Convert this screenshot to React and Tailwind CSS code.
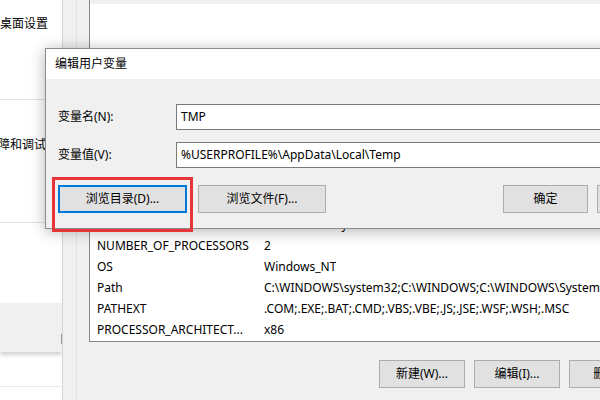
const font = { fontFamily: '"Noto Sans", "Noto Sans CJK SC", sans-serif' };

const rows = [
  ['DriverData', 'C:\\Windows\\System32\\Drivers\\DriverData'],
  ['NUMBER_OF_PROCESSORS', '2'],
  ['OS', 'Windows_NT'],
  ['Path', 'C:\\WINDOWS\\system32;C:\\WINDOWS;C:\\WINDOWS\\System32\\Wbem;C:\\WINDOWS\\System32\\WindowsPowerShell\\v1.0\\'],
  ['PATHEXT', '.COM;.EXE;.BAT;.CMD;.VBS;.VBE;.JS;.JSE;.WSF;.WSH;.MSC'],
  ['PROCESSOR_ARCHITECT...', 'x86'],
];

function WinButton({ children, className = '' }) {
  return (
    <div
      className={`h-[28px] shrink-0 flex items-center justify-center bg-[#e1e1e1] border border-[#adadad] text-[12px] text-black ${className}`}
    >
      {children}
    </div>
  );
}

export default function App() {
  return (
    <div className="w-[600px] h-[400px] relative overflow-hidden bg-white flex" style={font}>
      {/* settings pane behind */}
      <div className="w-[63px] shrink-0 flex flex-col bg-white border-r border-[#d4d4d4] overflow-hidden text-[12px] text-black">
        <div className="h-[100px] shrink-0 border-b border-[#e3e3e3] pt-[16px] leading-[16px] whitespace-nowrap">
          <span className="-ml-[24px] inline-block">远程桌面设置</span>
        </div>
        <div className="h-[123px] shrink-0 border-b border-[#e3e3e3] pt-[37px] leading-[16px] whitespace-nowrap">
          <span className="-ml-[14px] inline-block">故障和调试</span>
        </div>
        <div className="h-[80px] shrink-0" />
        <div className="h-[49px] shrink-0 bg-[#f0f0f0] shadow-[0_3px_4px_rgba(0,0,0,0.18)] flex justify-end items-end pb-[8px]">
          <div className="w-[1px] h-[10px] bg-[#9a9a9a]" />
        </div>
        <div className="h-[35px] shrink-0 border-b border-[#e8e8e8]" />
      </div>

      {/* environment variables window behind */}
      <div className="w-[14px] shrink-0 bg-[#f0f0f0] border-r border-[#e2e2e2]" />
      <div className="flex-1 min-w-0 flex flex-col bg-[#f0f0f0] pl-[12px]">
        <div className="h-[342px] shrink-0 bg-white border-l border-b border-[#828790] flex flex-col pb-[1px]">
          <div className="h-[4px] shrink-0 bg-[#f0f0f0]" />
          <div className="flex-1 flex flex-col justify-end">
            {rows.map(([name, value]) => (
              <div key={name} className="h-[21px] leading-[21px] flex text-[12px] text-black whitespace-nowrap pl-[7px]">
                <div className="w-[167px] shrink-0">{name}</div>
                <div className="overflow-hidden">{value}</div>
              </div>
            ))}
          </div>
        </div>
        <div className="flex pt-[18px] pl-[290px] gap-[9px]">
          <WinButton className="w-[86px]">新建(W)...</WinButton>
          <WinButton className="w-[86px]">编辑(I)...</WinButton>
          <WinButton className="w-[86px]">删除(L)</WinButton>
        </div>
      </div>

      {/* edit user variable dialog */}
      <div className="absolute left-[45px] top-[48px] w-[575px] h-[181px] border border-[#8c8c8c] bg-[#f0f0f0] shadow-[0_2px_14px_rgba(0,0,0,0.3)] flex flex-col">
        <div className="h-[30px] shrink-0 bg-white pl-[9px] leading-[30px] text-[12px] text-black">编辑用户变量</div>
        <div className="flex-1 flex flex-col pl-[12px] pt-[25px] text-[12px] text-black">
          <div className="flex items-center h-[26px]">
            <div className="w-[118px] shrink-0">变量名(N):</div>
            <div className="flex-1 h-[26px] bg-white border border-[#7a7a7a] pl-[4px] leading-[24px] text-[12px]">TMP</div>
          </div>
          <div className="flex items-center h-[26px] mt-[12px]">
            <div className="w-[118px] shrink-0">变量值(V):</div>
            <div className="flex-1 h-[26px] bg-white border border-[#7a7a7a] pl-[4px] leading-[24px] text-[12px] whitespace-nowrap">
              %USERPROFILE%\AppData\Local\Temp
            </div>
          </div>
          <div className="flex mt-[17px]">
            <div className="w-[129px] h-[28px] shrink-0 flex items-center justify-center bg-[#e1e1e1] border-2 border-[#0078d7]">
              浏览目录(D)...
            </div>
            <WinButton className="w-[128px] ml-[11px]">浏览文件(F)...</WinButton>
            <WinButton className="w-[85px] ml-[177px]">确定</WinButton>
            <WinButton className="w-[85px] ml-[9px]">取消</WinButton>
          </div>
        </div>
      </div>

      {/* red highlight */}
      <div className="absolute left-[52px] top-[177px] w-[141px] h-[55px] border-[3px] border-[#e6363a]" />
    </div>
  );
}
